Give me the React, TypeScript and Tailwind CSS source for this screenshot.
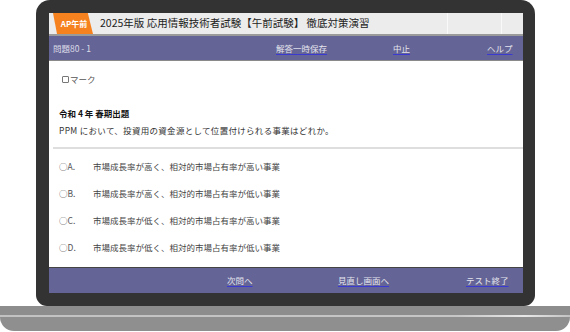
import React from "react";

const jp = "font-['Noto_Sans_CJK_JP','Noto_Sans',sans-serif]";

const options = [
  { key: "A", text: "市場成長率が高く、相対的市場占有率が高い事業" },
  { key: "B", text: "市場成長率が高く、相対的市場占有率が低い事業" },
  { key: "C", text: "市場成長率が低く、相対的市場占有率が高い事業" },
  { key: "D", text: "市場成長率が低く、相対的市場占有率が低い事業" },
];

function NavLink({ children }: { children: React.ReactNode }) {
  return (
    <span className="underline decoration-[#3a3ad0] underline-offset-[2px] text-[#e4e4ee]">
      {children}
    </span>
  );
}

export default function App() {
  return (
    <div className={`w-[570px] h-[332px] bg-white overflow-hidden ${jp}`}>
      {/* Bezel */}
      <div className="ml-[36px] w-[499px] h-[306px] bg-[#333333] rounded-t-[14px] rounded-b-[11px] pt-[13px] pl-[13px] pr-[12px]">
        {/* Screen */}
        <div className="flex flex-col w-[474px] h-[280px] bg-white">
          {/* Title bar */}
          <div className="flex items-stretch h-[21px] bg-[#ececec]">
            <div className="ml-[4px] w-[40px] bg-[#f5821f] [clip-path:polygon(0_0,87%_0,100%_100%,10%_100%)] flex items-center justify-center pl-[2px]">
              <span className="text-[8px] font-bold text-white leading-none">AP午前</span>
            </div>
            <div className="flex-1 flex items-center pl-[7px] text-[10.5px] text-[#222] leading-none whitespace-nowrap">
              2025年版 応用情報技術者試験【午前試験】 徹底対策演習
            </div>
            <div className="w-[54px] border-l border-[#f9f9f9]" />
            <div className="w-[22px] border-l border-[#f9f9f9]" />
          </div>
          <div className="h-[2px] bg-[#9a9a9a]" />

          {/* Nav bar */}
          <div className="flex items-center h-[24px] bg-[#646496] text-[8.5px] leading-none whitespace-nowrap">
            <div className="w-[227px] pl-[4px] text-[#dcdce8]">問題80 - 1</div>
            <div className="w-[117px]">
              <NavLink>解答一時保存</NavLink>
            </div>
            <div className="w-[94px]">
              <NavLink>中止</NavLink>
            </div>
            <div>
              <NavLink>ヘルプ</NavLink>
            </div>
          </div>
          <div className="h-px bg-[#8a8a8a]" />

          {/* Content */}
          <div className="flex-1 flex flex-col text-[8.5px] leading-none text-[#333]">
            <div className="flex items-center mt-[14px] pl-[13px] text-[#555]">
              <span className="w-[7px] h-[7px] border border-[#777] rounded-[1px] mr-[1px]" />
              マーク
            </div>
            <div className="mt-[25px] pl-[10px] font-bold text-[#111]">令和 4 年 春期出題</div>
            <div className="mt-[9px] pl-[10px] text-[#333] tracking-[0.3px]">
              PPM において、投資用の資金源として位置付けられる事業はどれか。
            </div>
            <div className="mt-[12px] ml-[4px] h-[2px] bg-[#dedede]" />
            <div className="flex flex-col mt-[13px] gap-[18.5px]">
              {options.map((o) => (
                <div key={o.key} className="flex items-center text-[#444]">
                  <span className="w-[44px] pl-[10px] text-[#555]">○{o.key}.</span>
                  <span>{o.text}</span>
                </div>
              ))}
            </div>
          </div>

          {/* Footer */}
          <div className="h-px bg-[#444]" />
          <div className="flex items-center h-[25px] bg-[#646496] text-[8.5px] leading-none whitespace-nowrap">
            <div className="w-[178px]" />
            <div className="w-[111px]">
              <NavLink>次問へ</NavLink>
            </div>
            <div className="w-[128px]">
              <NavLink>見直し画面へ</NavLink>
            </div>
            <div>
              <NavLink>テスト終了</NavLink>
            </div>
          </div>
        </div>
      </div>

      {/* Base */}
      <div className="h-[9px] bg-[#8d8d8d]" />
      <div className="h-[2px] bg-[linear-gradient(90deg,#c2c2c2_0%,#c6c6c6_80%,#e8e8e8_92%,#c2c2c2_100%)]" />
      <div className="h-[14px] bg-[#8f8f8f] rounded-b-[18px]" />
    </div>
  );
}
